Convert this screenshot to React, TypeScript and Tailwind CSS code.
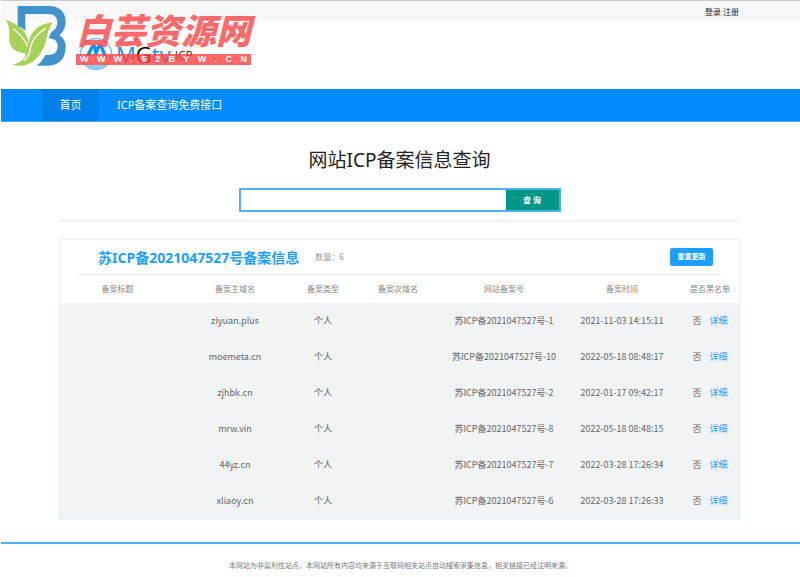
const latinCjk = "font-['Noto_Sans','Noto_Sans_CJK_SC',sans-serif]";

const columns = [
  { title: "备案标题", width: "w-[115px]" },
  { title: "备案主域名", width: "w-[120px]" },
  { title: "备案类型", width: "w-[56px]" },
  { title: "备案次域名", width: "w-[94px]" },
  { title: "网站备案号", width: "w-[118px]" },
  { title: "备案时间", width: "w-[118px]" },
  { title: "是否黑名单", width: "w-[58px]" },
];

const records = [
  { domain: "ziyuan.plus", license: "苏ICP备2021047527号-1", time: "2021-11-03 14:15:11" },
  { domain: "moemeta.cn", license: "苏ICP备2021047527号-10", time: "2022-05-18 08:48:17" },
  { domain: "zjhbk.cn", license: "苏ICP备2021047527号-2", time: "2022-01-17 09:42:17" },
  { domain: "mrw.vin", license: "苏ICP备2021047527号-8", time: "2022-05-18 08:48:15" },
  { domain: "44yz.cn", license: "苏ICP备2021047527号-7", time: "2022-03-28 17:26:34" },
  { domain: "xliaoy.cn", license: "苏ICP备2021047527号-6", time: "2022-03-28 17:26:33" },
];

function SiteLogo() {
  return (
    <a href="#" className="flex items-center text-[22px] leading-6 font-['Open_Sans',sans-serif]">
      <svg className="mr-[2px] size-9" viewBox="0 0 36 36" fill="none">
        <circle cx="18" cy="18" r="15.5" stroke="#7cc4f7" strokeWidth="1.5" />
        <path d="M6 27a15 15 0 0 0 24 0c-7 3-17 3-24 0Z" fill="#8accf8" />
        <path d="M8 22c3-2 5-12 7.500-12s1.500 7 2.500 7 1.500-7 4-7 4 10 6.500 12" stroke="#1490f5" strokeWidth="3.5" />
      </svg>
      <span className="text-[#1490f5]">M</span>
      <span className="text-black">G</span>
      <span className="text-[#1490f5]">tv</span>
      <span className="ml-1 pt-1 text-[12px] text-[#333]">ICP</span>
    </a>
  );
}

function Watermark() {
  return (
    <div className="pointer-events-none absolute top-0 left-0 flex items-start gap-1">
      <svg className="h-[70px] w-[72px]" viewBox="0 0 216 210">
        <path
          d="M53 18h93c32 0 51 18 51 46 0 18-6 31-19 42 13 8 19 19 19 35 0 34-20 56-52 56h-36c12-8 21-19 27-32h8c18 0 29-9 29-26 0-15-9-23-27-24 2-7 5-14 9-20 11-5 17-15 17-28 0-16-10-25-27-25H76v51c-8-8-15-12-23-15Z"
          fill="#4292cb"
        />
        <path
          d="M16 58c40 17 67 34 69 73 6-37 31-60 74-64-14 19-17 38-22 58-8 33-35 69-72 72-10 1-20 0-28-4 21-3 38-15 41-32-28-4-49-14-50-41-1-27 1-46-12-62Z"
          fill="#a8d158"
        />
        <path d="M40 86c20 16 35 33 43 53M136 86c-28 17-42 38-45 60-1 14-8 27-20 36" stroke="white" strokeWidth="4" fill="none" />
      </svg>
      <div className="pt-[9px]">
        <div className="text-[35px] leading-[40px] font-black italic text-[#ff4040]/80 font-['Noto_Sans_CJK_SC',sans-serif]">白芸资源网</div>
        <div className="mt-[5px] flex h-[11px] items-center justify-between bg-[#ff4040]/80 px-1 text-[9px] font-bold text-white font-['Liberation_Sans',sans-serif]">
          {"WWW.52BYW.CN".split("").map((letter, i) => (
            <span key={i}>{letter}</span>
          ))}
        </div>
      </div>
    </div>
  );
}

export default function App() {
  return (
    <div className={`relative pl-px text-[#666] ${latinCjk}`}>
      <div className="flex h-[22px] items-center justify-end gap-[2px] border-t border-[#ccc] bg-[#f8f8f8] pr-[61px] text-[8px] text-[#222]">
        <a href="#">登录</a>
        <a href="#">注册</a>
      </div>
      <header className="flex h-[67px] items-center pb-1 pl-[77px]">
        <SiteLogo />
      </header>
      <Watermark />

      <nav className="flex h-[33px] items-stretch border-b border-[#45a6fb] bg-[#008cff] pl-[41px] text-[11px] text-white">
        <a href="#" className="flex w-[57px] items-center justify-center bg-[#0080ea]">首页</a>
        <a href="#" className="flex items-center px-[18px]">ICP备案查询免费接口</a>
      </nav>

      <main className="mr-[60px] ml-[58px]">
        <section className="flex flex-col items-center border-b-2 border-[#f2f2f2] pt-6 pb-2">
          <h1 className="text-[19px] leading-7 text-[#222]">网站ICP备案信息查询</h1>
          <form className="mt-[14px] flex h-6 w-[322px] border-2 border-[#4aaefa]" onSubmit={(e) => e.preventDefault()}>
            <input aria-label="备案查询" className="min-w-0 flex-1 px-2 text-[9px] outline-none" />
            <button className="w-[53px] bg-[#009688] text-[8px] font-bold text-white">查 询</button>
          </form>
        </section>

        <section className="mt-[17px] border border-[#eee]">
          <div className="mx-[18px] flex h-[35px] items-center border-b border-[#e6e6e6] pr-2 pl-5">
            <h2 className="text-[14px] font-bold text-[#1e9fff]">苏ICP备2021047527号备案信息</h2>
            <span className="ml-4 text-[8px] text-[#999]">数量：6</span>
            <button className="ml-auto h-[18px] w-[43px] rounded-[2px] bg-[#1e9fff] text-[7px] font-bold text-white">重置更新</button>
          </div>
          <table className="w-full table-fixed text-center text-[9px] font-['Noto_Sans_CJK_SC',sans-serif]">
            <thead>
              <tr className="h-7 text-[8px] text-[#888]">
                {columns.map((column) => (
                  <th key={column.title} className={`p-0 font-normal whitespace-nowrap ${column.width}`}>{column.title}</th>
                ))}
              </tr>
            </thead>
            <tbody className="bg-[#f0f4f5]">
              {records.map((record) => (
                <tr key={record.domain} className="h-9 whitespace-nowrap">
                  <td className="p-0" />
                  <td className="p-0">{record.domain}</td>
                  <td className="p-0">个人</td>
                  <td className="p-0" />
                  <td className="p-0">{record.license}</td>
                  <td className="p-0">{record.time}</td>
                  <td className="p-0">
                    否<a href="#" className="ml-2 text-[#1e9fff]">详细</a>
                  </td>
                </tr>
              ))}
            </tbody>
          </table>
        </section>
      </main>

      <footer className="mt-[22px] border-t-2 border-[#4aaefa] pt-4 pb-1 text-center text-[7px] leading-3 text-[#777]">
        本网站为非赢利性站点，本网站所有内容均来源于互联网相关站点自动搜索采集信息，相关链接已经注明来源。
      </footer>
    </div>
  );
}
